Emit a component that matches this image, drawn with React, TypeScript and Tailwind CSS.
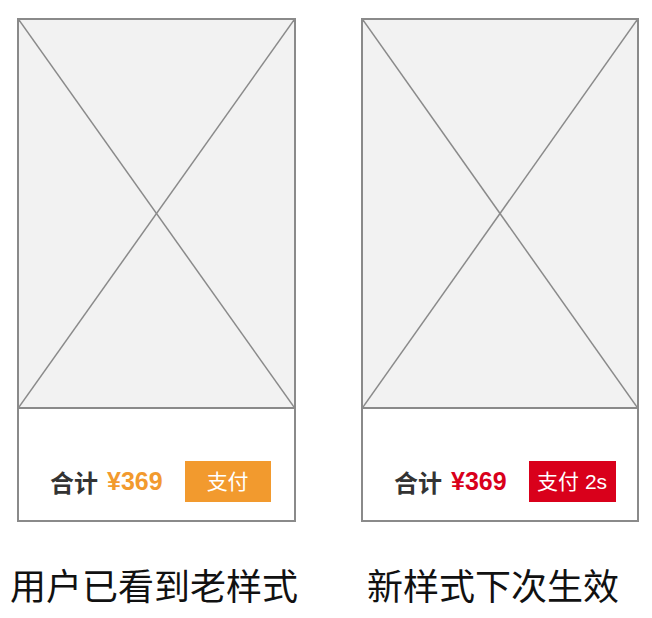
import React from 'react';

const cjk = "font-['Noto_Sans_CJK_SC',sans-serif]";
const latin = "font-['Liberation_Sans','Noto_Sans_CJK_SC',sans-serif]";

// Grey placeholder box with a cross through it
const Placeholder = () => (
    <div className="h-[389px] bg-[#f2f2f2] border-b-2 border-[#8a8a8a]">
        <svg className="w-full h-full block" viewBox="0 0 100 100" preserveAspectRatio="none">
            <line x1="0" y1="0" x2="100" y2="100" stroke="#8a8a8a" strokeWidth="1.5" vectorEffect="non-scaling-stroke" />
            <line x1="100" y1="0" x2="0" y2="100" stroke="#8a8a8a" strokeWidth="1.5" vectorEffect="non-scaling-stroke" />
        </svg>
    </div>
);

type PhoneProps = {
    width: string;
    priceClass: string;
    buttonClass: string;
    buttonLabel: string;
};

const Phone = ({ width, priceClass, buttonClass, buttonLabel }: PhoneProps) => (
    <div className={`${width} h-[504px] flex flex-col border-2 border-[#8a8a8a] bg-white`}>
        <Placeholder />
        {/* Checkout bar */}
        <div className="flex-1 flex items-end pl-[31px] pb-[18px]">
            <div className="flex items-center h-[41px]">
                <span className={`${cjk} text-[24px] font-bold text-[#333] leading-none`}>合计</span>
                <span className={`${latin} ml-[9px] text-[25px] font-bold leading-none ${priceClass}`}>¥369</span>
                <button
                    className={`${latin} ml-[22px] h-[41px] flex items-center justify-center text-[21px] text-white leading-none ${buttonClass}`}
                >
                    {buttonLabel}
                </button>
            </div>
        </div>
    </div>
);

export default function App() {
    return (
        <div className="w-[652px] h-[618px] bg-white overflow-hidden">
            <div className="flex pt-[18px] pl-[17px] gap-[65px]">
                <Phone width="w-[279px]" priceClass="text-[#f29a2e]" buttonClass="w-[86px] bg-[#f29a2e]" buttonLabel="支付" />
                <Phone width="w-[278px]" priceClass="text-[#d9001b]" buttonClass="w-[87px] bg-[#d9001b]" buttonLabel="支付 2s" />
            </div>
            <div className={`${cjk} flex mt-[44px] text-[36px] leading-none text-[#111]`}>
                <span className="ml-[10px]">用户已看到老样式</span>
                <span className="ml-[69px]">新样式下次生效</span>
            </div>
        </div>
    );
}
